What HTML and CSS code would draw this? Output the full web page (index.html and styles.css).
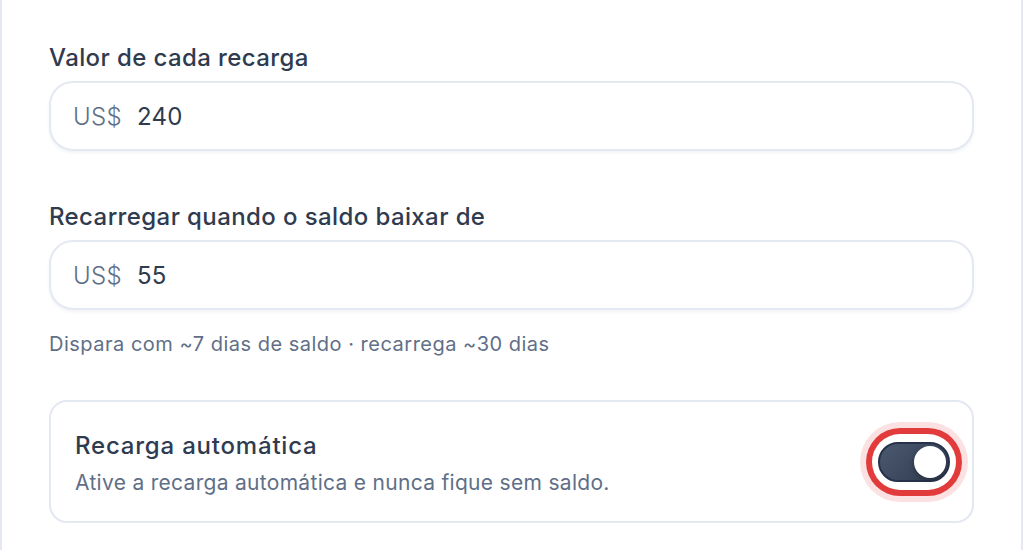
FILE: index.html
```html
<!DOCTYPE html>
<html lang="pt-BR">
<head>
  <meta charset="UTF-8" />
  <meta name="viewport" content="width=device-width, initial-scale=1.0" />
  <title>Recarga automática</title>
  <link rel="stylesheet" href="styles.css">
</head>
<body>
  <div class="panel">
    <div class="field">
      <label class="field-label" for="amountInput">Valor de cada recarga</label>
      <div class="money-input">
        <span class="currency">US$</span>
        <input type="text" id="amountInput" value="240" />
      </div>
    </div>

    <div class="field">
      <label class="field-label" for="thresholdInput">Recarregar quando o saldo baixar de</label>
      <div class="money-input">
        <span class="currency">US$</span>
        <input type="text" id="thresholdInput" value="55" />
      </div>
      <p class="hint">Dispara com ~7 dias de saldo · recarrega ~30 dias</p>
    </div>

    <div class="auto-card">
      <div class="auto-text">
        <p class="auto-title">Recarga automática</p>
        <p class="auto-desc">Ative a recarga automática e nunca fique sem saldo.</p>
      </div>
      <button class="switch is-on" aria-pressed="true">
        <span class="switch-track"><span class="switch-knob"></span></span>
      </button>
    </div>
  </div>
</body>
</html>
```

FILE: styles.css
```css
:root {
  --text-dark: #2f3b4f;
  --text-muted: #5f6f87;
  --line: #e3e8f1;
  --danger: #e23b3b;
  --danger-soft: #fbe1e1;
}

body {
  margin: 0;
  background: #fff;
  font-family: Inter, 'Noto Sans', sans-serif;
  color: var(--text-dark);
}

.panel {
  border-left: 2px solid var(--line);
  border-right: 2px solid var(--line);
  margin-right: 1px;
  padding: 42px 47px 40px;
  height: 550px;
  box-sizing: border-box;
}

.field {
  margin-bottom: 50px;
}

.field-label {
  display: block;
  font-size: 24px;
  line-height: 32px;
  font-weight: 500;
  letter-spacing: 0.4px;
  margin-bottom: 7px;
}

.money-input {
  display: flex;
  align-items: center;
  height: 70px;
  box-sizing: border-box;
  border: 2px solid var(--line);
  border-radius: 24px;
  padding: 0 22px;
  box-shadow: 0 2px 3px rgba(30, 50, 90, 0.06);
  gap: 15px;
}

.currency {
  font-size: 24px;
  font-weight: 300;
  letter-spacing: 0.3px;
  color: var(--text-muted);
}

.money-input input {
  flex: 1;
  border: none;
  outline: none;
  font-family: inherit;
  font-size: 24px;
  letter-spacing: 0.3px;
  color: var(--text-dark);
  padding: 0;
  background: transparent;
}

.field:nth-child(2) {
  margin-bottom: 44px;
}

.hint {
  margin: 22px 0 0;
  font-size: 20px;
  letter-spacing: 0.5px;
  color: var(--text-muted);
}

.auto-card {
  display: flex;
  align-items: center;
  justify-content: space-between;
  height: 123px;
  box-sizing: border-box;
  border: 2px solid var(--line);
  border-radius: 18px;
  padding: 0 16px 0 24px;
}

.auto-text {
  padding-top: 5px;
}

.auto-title {
  margin: 0 0 8px;
  font-size: 24px;
  line-height: 30px;
  font-weight: 500;
  letter-spacing: 0.8px;
}

.auto-desc {
  margin: 0;
  font-size: 21px;
  line-height: 28px;
  letter-spacing: 0.3px;
  color: var(--text-muted);
}

.switch {
  padding: 8px 6px;
  border: none;
  background: #fff;
  border-radius: 28px;
  cursor: pointer;
  box-shadow: 0 0 0 6px var(--danger), 0 0 0 12px var(--danger-soft);
}

.switch-track {
  display: flex;
  justify-content: flex-end;
  align-items: center;
  width: 72px;
  height: 40px;
  box-sizing: border-box;
  border: 2px solid #27324a;
  border-radius: 20px;
  padding: 2px;
  background: linear-gradient(135deg, #4b596f, #2e394d);
}

.switch-knob {
  width: 32px;
  height: 32px;
  border-radius: 50%;
  background: #fff;
  box-shadow: -1px 2px 4px rgba(0, 0, 0, 0.25);
}
```
